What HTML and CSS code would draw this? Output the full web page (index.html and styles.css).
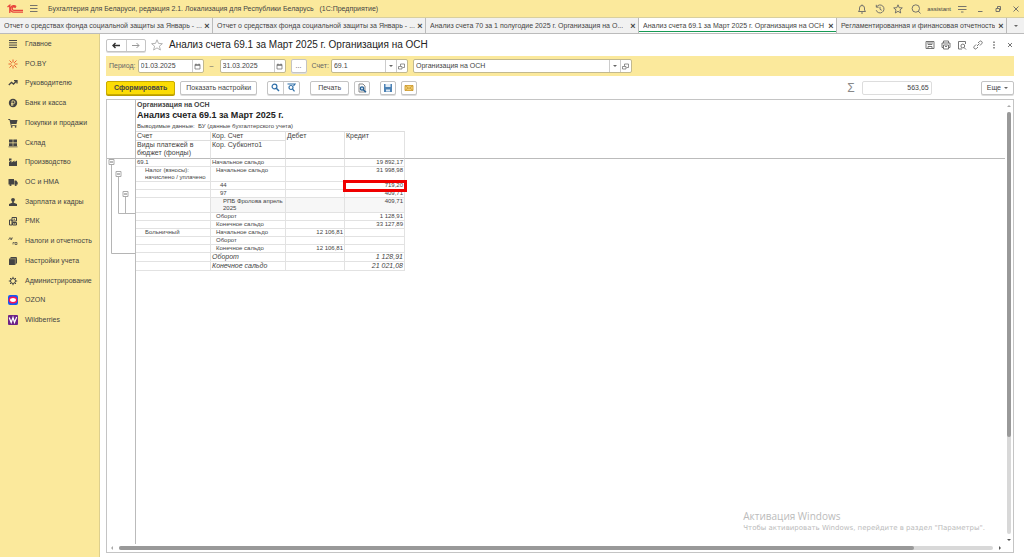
FILE: index.html
```html
<!DOCTYPE html>
<html lang="ru">
<head>
    <meta charset="UTF-8">
    <meta name="viewport" content="width=device-width, initial-scale=1.0">
    <title>Бухгалтерия для Беларуси</title>
    <link rel="stylesheet" href="styles.css">
</head>
<body>
    <!-- Window title -->
    <header class="title-bar">
        <svg class="logo" width="17" height="10" viewBox="0 0 17 10"><path d="M0.500 3L2.800 1.200V9M9.200 2.600A3.300 3.300 0 1 0 7 8.200H16M8.500 4A1.700 1.700 0 1 0 7 6.300H16" fill="none" stroke="#e8453c" stroke-width="1.300"/></svg>
        <button class="icon-button" aria-label="Меню"><svg width="9" height="9" viewBox="0 0 9 9"><path d="M1 1.500H8.500M1 4.500H8.500M1 7.500H8.500"/></svg></button>
        <span class="app-name">Бухгалтерия для Беларуси, редакция 2.1. Локализация для Республики Беларусь &nbsp; (1С:Предприятие)</span>
        <div class="window-tools">
            <button class="icon-button" aria-label="Уведомления"><svg width="10" height="10" viewBox="0 0 10 10"><path d="M1.500 7.500L2.500 6V4A2.500 2.500 0 0 1 7.500 4V6L8.500 7.500ZM4 9H6M5 0.500V1.500"/></svg></button>
            <button class="icon-button" aria-label="История"><svg width="10" height="10" viewBox="0 0 10 10"><path d="M1.500 3A4 4 0 1 1 1.200 6.200M1.300 0.800V3.200H3.700M5 2.800V5.300L6.800 6.300"/></svg></button>
            <button class="icon-button" aria-label="Избранное"><svg width="10" height="10" viewBox="0 0 10 10"><path d="M5 0.800L6.200 3.700L9.300 3.900L7 5.900L7.700 9L5 7.300L2.300 9L3 5.900L0.700 3.900L3.800 3.700Z"/></svg></button>
            <button class="icon-button" aria-label="Поиск"><svg width="10" height="10" viewBox="0 0 10 10"><circle cx="4.800" cy="4.500" r="3.700"/><path d="M7.200 7L9.500 9.500"/></svg></button>
            <span class="user">assistant</span>
            <button class="icon-button" aria-label="Настройки"><svg width="10" height="10" viewBox="0 0 10 10"><path d="M1 2.500H9.500M1 5.500H9.500M4 8H6.500"/></svg></button>
            <button class="icon-button" aria-label="Свернуть"><svg width="10" height="10" viewBox="0 0 10 10"><path d="M3 7.500H7.500"/></svg></button>
            <button class="icon-button" aria-label="Восстановить"><svg width="10" height="10" viewBox="0 0 10 10"><path d="M3 4.500H6.500V7.500H3ZM4.500 4V2.500H7.500V6H7"/></svg></button>
            <button class="icon-button" aria-label="Закрыть"><svg width="10" height="10" viewBox="0 0 10 10"><path d="M2.500 2.500L7.500 7.500M7.500 2.500L2.500 7.500"/></svg></button>
        </div>
    </header>

    <!-- Open windows -->
    <nav class="tabs">
        <div class="tab wide"><a href="#">Отчет о средствах фонда социальной защиты за Январь - ...</a><button aria-label="Закрыть">×</button></div>
        <div class="tab wide"><a href="#">Отчет о средствах фонда социальной защиты за Январь - ...</a><button aria-label="Закрыть">×</button></div>
        <div class="tab wide"><a href="#">Анализ счета 70 за 1 полугодие 2025 г. Организация на О...</a><button aria-label="Закрыть">×</button></div>
        <div class="tab medium active"><a href="#">Анализ счета 69.1 за Март 2025 г. Организация на ОСН</a><button aria-label="Закрыть">×</button></div>
        <div class="tab narrow"><a href="#">Регламентированная и финансовая отчетность</a><button aria-label="Закрыть">×</button></div>
        <button class="tab-list" aria-label="Все окна"><span class="caret"></span></button>
    </nav>

    <div class="workspace">
        <nav class="sidebar">
            <ul>
                <li><a href="#"><svg viewBox="0 0 10 10"><path d="M1 1.500H9M1 3.800H9M1 6.100H9M1 8.400H9" class="line"/></svg>Главное</a></li>
                <li><a href="#"><svg viewBox="0 0 10 10"><path d="M5 0.500V3.500M5 6.500V9.500M0.500 5H3.500M6.500 5H9.500M1.500 1.500L3.800 3.800M8.500 1.500L6.200 3.800M1.500 8.500L3.800 6.200M8.500 8.500L6.200 6.200" class="line orange"/></svg>PO.BY</a></li>
                <li><a href="#"><svg viewBox="0 0 10 10"><path d="M0.800 7L3.500 4.300L5.500 6L8.500 3M6 2.700H9V5.500" class="line bold"/></svg>Руководителю</a></li>
                <li><a href="#"><svg viewBox="0 0 10 10"><circle cx="5" cy="5" r="4.200"/><path d="M4 8V2.800H5.500A1.400 1.400 0 0 1 5.500 5.600H3M3 6.900H5.500" class="line cut"/></svg>Банк и касса</a></li>
                <li><a href="#"><svg viewBox="0 0 10 10"><path d="M0.300 1H2L2.500 2H9.500L8.500 6H3.300L3.500 7H8.500V7.800H2.800L1.500 1.900H0.300Z"/><circle cx="3.700" cy="8.800" r="0.900"/><circle cx="7.600" cy="8.800" r="0.900"/></svg>Покупки и продажи</a></li>
                <li><a href="#"><svg viewBox="0 0 10 10"><path d="M1 1.500H4.700V4.500H1ZM5.300 1.500H9V4.500H5.300ZM1 5.200H4.700V8H1ZM5.300 5.200H9V8H5.300ZM0.500 8.500H9.500V9.200H0.500Z"/></svg>Склад</a></li>
                <li><a href="#"><svg viewBox="0 0 10 10"><path d="M1 9V5L3.500 3.500V5.500L6.500 3.500V5L9 3.500V9ZM1 1.500H3.500V3L1 4Z"/></svg>Производство</a></li>
                <li><a href="#"><svg viewBox="0 0 10 10"><path d="M0.500 2H6V7.500H0.500ZM6.400 3.500H8.300L9.700 5.500V7.500H6.400Z"/><circle cx="2.500" cy="8" r="1.100"/><circle cx="7.700" cy="8" r="1.100"/></svg>ОС и НМА</a></li>
                <li><a href="#"><svg viewBox="0 0 10 10"><circle cx="5" cy="2.800" r="1.900"/><path d="M4.200 4H5.800V5.800L9 7V9H1V7L4.200 5.800Z"/></svg>Зарплата и кадры</a></li>
                <li><a href="#"><svg viewBox="0 0 10 10"><path d="M1.500 4H4V9H1.500ZM4 1.500H8.500V5H4ZM4.500 6.500H8.500V9H4.500ZM5.500 3.200H7M5.500 7.800H7.500" class="line"/></svg>РМК</a></li>
                <li><a href="#"><svg viewBox="0 0 10 10"><path d="M0.500 4L2 1.500L3 4M3.500 4V2H5M5 8.500V6.500H6.500M7 8.500V6.500H9V8.500Z" class="line light"/></svg>Налоги и отчетность</a></li>
                <li><a href="#"><svg viewBox="0 0 10 10"><path d="M1 3L3 1H9V7L7 9H1Z"/><path d="M7.300 3V8.500M1.500 2.800H7.300L9 1.300" class="line cut thin"/></svg>Настройки учета</a></li>
                <li><a href="#"><svg viewBox="0 0 10 10"><circle cx="5" cy="5" r="2.500" class="line"/><path d="M5 0.800V2.500M5 7.500V9.200M0.800 5H2.500M7.500 5H9.200M2 2L3.300 3.300M8 2L6.700 3.300M2 8L3.300 6.700M8 8L6.700 6.700" class="line"/></svg>Администрирование</a></li>
                <li><a href="#"><svg viewBox="0 0 10 10"><rect width="10" height="10" rx="2" fill="#1459f5"/><ellipse cx="5" cy="5" rx="3.700" ry="2.700" fill="#fff" stroke="#f91155" stroke-width="1.500"/></svg>OZON</a></li>
                <li><a href="#"><svg viewBox="0 0 10 10"><rect width="10" height="10" rx="1" fill="#6d2387"/><path d="M1.200 2.500L3.200 7.500L5 2.500L6.500 7.500L8.700 2" fill="none" stroke="#fff" stroke-width="1.200"/></svg>Wildberries</a></li>
            </ul>
        </nav>

        <main class="form">
            <div class="form-head">
                <div class="button-pair">
                    <button aria-label="Назад"><svg width="9" height="7" viewBox="0 0 9 7"><path d="M1 3.500H8M3.500 1L1 3.500L3.500 6" fill="none" stroke="#333" stroke-width="1.400"/></svg></button>
                    <button aria-label="Вперед"><svg width="9" height="7" viewBox="0 0 9 7"><path d="M1 3.500H8M5.500 1L8 3.500L5.500 6" fill="none" stroke="#999"/></svg></button>
                </div>
                <button class="icon-button star" aria-label="В избранное"><svg width="12" height="12" viewBox="0 0 12 12"><path d="M6 0.800L7.500 4.400L11.400 4.700L8.400 7.200L9.400 11L6 8.900L2.600 11L3.600 7.200L0.600 4.700L4.500 4.400Z"/></svg></button>
                <h1>Анализ счета 69.1 за Март 2025 г. Организация на ОСН</h1>
                <div class="form-tools">
                    <button class="icon-button" aria-label="Сохранить"><svg width="10" height="10" viewBox="0 0 10 10"><path d="M1 1.500H9V8.500H1ZM3 1.500V4.500H7V1.500M3 8.500V6.500H7V8.500M4 3H6"/></svg></button>
                    <button class="icon-button" aria-label="Печать"><svg width="10" height="10" viewBox="0 0 10 10"><path d="M2.500 3V1H7.500V3M2 7.500H1V3H9V7.500H8M2.500 5H7.500V9H2.500ZM4 6.500H6"/></svg></button>
                    <button class="icon-button" aria-label="Просмотр"><svg width="10" height="10" viewBox="0 0 10 10"><path d="M5 9H1.500V1.500H8.500V4M7 7.500L9 9.500"/><circle cx="5.800" cy="6" r="1.900"/></svg></button>
                    <button class="icon-button" aria-label="Ссылка"><svg width="10" height="10" viewBox="0 0 10 10"><path d="M4 6L6.500 3.500M5 3L6.500 1.500A1.500 1.500 0 0 1 8.700 3.700L7 5.500M5 7L3.500 8.500A1.500 1.500 0 0 1 1.300 6.300L3 4.500"/></svg></button>
                    <button class="icon-button dots" aria-label="Еще"><svg width="10" height="10" viewBox="0 0 10 10"><path d="M5 1.500V3M5 4.300V5.800M5 7V8.500"/></svg></button>
                    <button class="icon-button" aria-label="Закрыть"><svg width="10" height="10" viewBox="0 0 10 10"><path d="M3 3L7 7M7 3L3 7"/></svg></button>
                </div>
            </div>

            <!-- Report parameters -->
            <div class="params">
                <div class="labelled">
                    <label for="dateFrom">Период:</label>
                    <div class="field date">
                        <input type="text" id="dateFrom" value="01.03.2025">
                        <button aria-label="Календарь"><svg width="7" height="7" viewBox="0 0 7 7"><path d="M1 1.500H6V6H1ZM1 2.500H6M2 0.500V2M5 0.500V2"/></svg></button>
                    </div>
                </div>
                <label for="dateTo" class="dash">–</label>
                <div class="field date">
                    <input type="text" id="dateTo" value="31.03.2025">
                    <button aria-label="Календарь"><svg width="7" height="7" viewBox="0 0 7 7"><path d="M1 1.500H6V6H1ZM1 2.500H6M2 0.500V2M5 0.500V2"/></svg></button>
                </div>
                <button class="button small">...</button>
                <div class="labelled">
                    <label for="account">Счет:</label>
                    <div class="field account">
                        <select id="account"><option>69.1</option></select>
                        <button aria-label="Открыть"><svg width="7" height="7" viewBox="0 0 7 7"><path d="M0.500 3.500H4V6H0.500ZM2.500 3V1H6.500V4.500H4.500"/></svg></button>
                    </div>
                </div>
                <div class="field company">
                    <select aria-label="Организация"><option>Организация на ОСН</option></select>
                    <button aria-label="Открыть"><svg width="7" height="7" viewBox="0 0 7 7"><path d="M0.500 3.500H4V6H0.500ZM2.500 3V1H6.500V4.500H4.500"/></svg></button>
                </div>
            </div>

            <!-- Commands -->
            <div class="commands">
                <button class="button roomy primary">Сформировать</button>
                <button class="button">Показать настройки</button>
                <div class="button-pair search">
                    <button aria-label="Найти"><svg width="9" height="9" viewBox="0 0 9 9"><circle cx="3.500" cy="3.500" r="2.400" fill="none" stroke="#2f6fa8" stroke-width="1.200"/><path d="M5.300 5.300L8 8" stroke="#2f6fa8" stroke-width="1.500"/></svg></button>
                    <button aria-label="Найти далее"><svg width="9" height="9" viewBox="0 0 9 9"><circle cx="4" cy="4.500" r="2" fill="none" stroke="#2f6fa8" stroke-width="1.200"/><path d="M5.500 6L7.500 8.300M0.500 1H8L6.500 3" fill="none" stroke="#2f6fa8" stroke-width="1.200"/></svg></button>
                </div>
                <button class="button roomy">Печать</button>
                <button class="button small preview" aria-label="Предварительный просмотр"><svg width="10" height="10" viewBox="0 0 10 10"><path d="M2 1H6L8 3V9H2Z" fill="#fff" stroke="#888"/><circle cx="5" cy="5.500" r="1.700" fill="#cfe2f2" stroke="#245f94" stroke-width="1.200"/><path d="M6.300 6.800L9 9.300" stroke="#245f94" stroke-width="1.500"/></svg></button>
                <button class="button small" aria-label="Сохранить"><svg width="10" height="10" viewBox="0 0 10 10"><path d="M1 1H9V9H1Z" fill="#4c82b5"/><path d="M2.500 1H7.500V4H2.500ZM3 6.500H7V8.500H3Z" fill="#dfeaf4"/></svg></button>
                <button class="button small" aria-label="Отправить"><svg width="10" height="10" viewBox="0 0 10 10"><path d="M1 2.500H9V7.500H1Z" fill="#f3cf70" stroke="#d6a640"/><path d="M1 2.500L5 5.500L9 2.500M1 7.500L4 5M9 7.500L6 5" fill="none" stroke="#b8841c" stroke-width="0.600"/></svg></button>
                <label class="sum-label" for="sum">Σ</label>
                <input type="text" class="sum" id="sum" value="563,65" readonly>
                <button class="button more">Еще <span class="caret"></span></button>
            </div>

            <!-- Report sheet -->
            <section class="report">
                <div class="report-view">
                    <div class="groups">
                        <div class="groups-head"></div>
                        <svg width="28" height="96" viewBox="0 0 28 96"><path d="M4.500 5V94.500H28M11.500 17V54.500H28M18.500 37V54.500" fill="none" stroke="#b5b5b5"/><path d="M2 0.500H7V5.500H2ZM9 12.500H14V17.500H9ZM16 32.500H21V37.500H16Z" fill="#fff" stroke="#aaa"/><path d="M3 3H6M10 15H13M17 35H20" stroke="#777"/></svg>
                    </div>
                    <div class="sheet">
                        <div class="sheet-title">
                            <p class="company-name">Организация на ОСН</p>
                            <h2>Анализ счета 69.1 за Март 2025 г.</h2>
                            <p>Выводимые данные: &nbsp;БУ (данные бухгалтерского учета)</p>
                        </div>
                        <table>
                            <colgroup><col class="c1"><col class="c2"><col class="c3"><col class="c4"><col></colgroup>
                            <thead>
                                <tr><th>Счет</th><th>Кор. Счет</th><th rowspan="2">Дебет</th><th rowspan="2">Кредит</th><td rowspan="2"></td></tr>
                                <tr><th>Виды платежей в бюджет (фонды)</th><th>Кор. Субконто1</th></tr>
                            </thead>
                            <tbody>
                                <tr><td>69.1</td><td>Начальное сальдо</td><td></td><td>19 892,17</td></tr>
                                <tr><td class="in1">Налог (взносы): начислено / уплачено</td><td class="in0">Начальное сальдо</td><td></td><td>31 998,98</td></tr>
                                <tr><td></td><td class="in1">44</td><td></td><td class="marked">719,20</td></tr>
                                <tr><td></td><td class="in1">97</td><td></td><td>409,71</td></tr>
                                <tr class="detail"><td></td><td class="in2">РПБ Фролова апрель 2025</td><td></td><td>409,71</td></tr>
                                <tr><td></td><td class="in0">Оборот</td><td></td><td>1 128,91</td></tr>
                                <tr><td></td><td class="in0">Конечное сальдо</td><td></td><td>33 127,89</td></tr>
                                <tr><td class="in1">Больничный</td><td class="in0">Начальное сальдо</td><td>12 106,81</td><td></td></tr>
                                <tr><td></td><td class="in0">Оборот</td><td></td><td></td></tr>
                                <tr><td></td><td class="in0">Конечное сальдо</td><td>12 106,81</td><td></td></tr>
                                <tr class="total"><td></td><td>Оборот</td><td></td><td>1 128,91</td></tr>
                                <tr class="total"><td></td><td>Конечное сальдо</td><td></td><td>21 021,08</td></tr>
                            </tbody>
                        </table>
                    </div>
                    <div class="scroll vertical"><span class="arrow up"></span><div class="track"><div class="thumb"></div></div><span class="arrow down"></span></div>
                </div>
                <div class="scroll horizontal"><span class="arrow left"></span><div class="track"><div class="thumb"></div></div><span class="arrow right"></span></div>
                <div class="watermark">
                    <strong>Активация Windows</strong>
                    <span>Чтобы активировать Windows, перейдите в раздел "Параметры".</span>
                </div>
            </section>
        </main>
    </div>
</body>
</html>
```
FILE: styles.css
```css
* {
    box-sizing: border-box;
}
body {
    display: flex;
    flex-direction: column;
    height: 100vh;
    margin: 0;
    overflow: hidden;
    font-family: "Liberation Sans", Arial, sans-serif;
    font-size: 7px;
    line-height: 8px;
    color: #444;
    background-color: #fff;
}
button, input, select {
    font: inherit;
    color: inherit;
    margin: 0;
    padding: 0;
    border: none;
    background: none;
}
button {
    display: flex;
    align-items: center;
    justify-content: center;
    cursor: pointer;
}
a {
    color: inherit;
    text-decoration: none;
}
h1, h2, p, ul {
    margin: 0;
    padding: 0;
}
.icon-button svg, .field svg {
    fill: none;
    stroke: #666;
    stroke-width: 0.9;
}
.field svg {
    stroke-width: 0.7;
}
.caret {
    border: 2px solid transparent;
    border-top-color: #666;
    border-bottom-width: 0;
}

/* Title bar */
.title-bar {
    display: flex;
    align-items: center;
    flex: none;
    height: 17px;
    padding: 0 3px 0 7px;
    background-color: #fbe99c;
}
.title-bar .logo {
    margin-right: 5px;
}
.app-name {
    margin-left: 10px;
}
.window-tools {
    display: flex;
    align-items: center;
    gap: 8px;
    margin-left: auto;
}
.user {
    font-size: 6px;
    margin: 0 -2px;
}

/* Tabs */
.tabs {
    display: flex;
    flex: none;
    height: 17px;
    background-color: #f1f1f1;
    border-top: 1px solid #d8cf9f;
    border-bottom: 1px solid #bbb;
}
.tab {
    display: flex;
    align-items: center;
    justify-content: space-between;
    min-width: 0;
    padding: 0 2px 0 4px;
    border-right: 1px solid #bbb;
    white-space: nowrap;
}
.tab.wide {
    flex: 1 1 213px;
}
.tab.medium {
    flex: 1 1 198px;
}
.tab.narrow {
    flex: 1 1 170px;
}
.tab a {
    overflow: hidden;
}
.tab button {
    flex: none;
    width: 6px;
    font-size: 9px;
    font-weight: bold;
}
.tab.active {
    background-color: #fff;
    box-shadow: inset 0 -1px #fff, inset 0 -2px #169a54;
}
.tab-list {
    flex: none;
    width: 17px;
}

/* Sidebar */
.workspace {
    display: flex;
    flex: 1;
    min-height: 0;
}
.sidebar {
    flex: none;
    width: 100px;
    background-color: #fbe99c;
    border-right: 1px solid #ddcf8e;
}
.sidebar ul {
    display: grid;
    grid-auto-rows: 1fr;
    height: 296px;
    list-style: none;
}
.sidebar a {
    display: flex;
    align-items: center;
    gap: 7px;
    height: 100%;
    padding-left: 8px;
    white-space: nowrap;
}
.sidebar svg {
    width: 10px;
    height: 10px;
    fill: #444;
}
.sidebar .line {
    fill: none;
    stroke: #444;
}
.sidebar .bold {
    stroke-width: 1.3;
}
.sidebar .light {
    stroke-width: 0.7;
}
.sidebar .orange {
    stroke: #e8632c;
}
.sidebar .cut {
    stroke: #fbe99c;
    stroke-width: 0.8;
}
.sidebar .thin {
    stroke-width: 0.4;
}

/* Form */
.form {
    display: flex;
    flex-direction: column;
    flex: 1;
    min-width: 0;
    padding: 0 10px 4px 6px;
}
.form-head {
    display: flex;
    align-items: center;
    flex: none;
    height: 22px;
}
.form-head .star {
    margin: 0 6px 0 5px;
}
.star svg {
    stroke: #aaa;
}
h1 {
    font-size: 10px;
    line-height: 12px;
    font-weight: normal;
    color: #222;
}
.form-tools {
    display: flex;
    gap: 6px;
    margin: 0 -1px 0 auto;
}
.form-tools .dots svg {
    stroke-width: 1.4;
}
.button, .button-pair {
    border: 1px solid #c4c4c4;
    border-radius: 2px;
    background-color: #fff;
    box-shadow: 0 1px #ddd;
}
.button {
    height: 14px;
    padding: 0 5px;
    white-space: nowrap;
}
.button.roomy {
    padding: 0 7px;
}
.button.small {
    width: 16px;
    padding: 0;
}
.button-pair {
    display: flex;
    width: 40px;
    height: 13px;
}
.button-pair button {
    flex: 1;
}
.button-pair button + button {
    border-left: 1px solid #ccc;
}

/* Parameters */
.params {
    display: flex;
    align-items: center;
    gap: 5px;
    flex: none;
    height: 20px;
    padding-left: 3px;
    background-color: #fbe99c;
}
.params label {
    color: #666;
}
.params label.dash {
    width: 6px;
    text-align: center;
}
.labelled {
    display: flex;
    align-items: center;
    gap: 2px;
}
.field {
    display: flex;
    height: 14px;
    border: 1px solid #c2b98f;
    border-radius: 2px;
    background-color: #fff;
}
.field input, .field select {
    flex: 1;
    min-width: 0;
    padding-left: 2px;
}
.field select {
    appearance: none;
    background: url("data:image/svg+xml,%3Csvg xmlns='http://www.w3.org/2000/svg' width='11' height='12'%3E%3Cpath d='M.5 0V12' stroke='%23ccc'/%3E%3Cpath d='M4 5H8L6 7Z' fill='%23666'/%3E%3C/svg%3E") no-repeat right center;
}
.field button {
    width: 11px;
    border-left: 1px solid #ccc;
}
.field.date {
    width: 66px;
}
.field.account {
    width: 77px;
}
.field.company {
    width: 219px;
}

/* Commands */
.commands {
    display: flex;
    align-items: center;
    gap: 5px;
    flex: none;
    height: 23px;
}
.button.primary {
    font-weight: bold;
    background-color: #fbdc05;
    border-color: #c9ab00;
    box-shadow: 0 1px #b89c00;
}
.button-pair.search {
    width: 33px;
    height: 14px;
    margin: 0 5px;
}
.preview {
    margin-right: 5px;
}
.sum-label {
    margin-left: auto;
    font-size: 12px;
    color: #888;
}
.sum {
    width: 70px;
    height: 14px;
    margin: 0 44px 0 2px;
    padding-right: 2px;
    border: 1px solid #ddd;
    border-radius: 2px;
    text-align: right;
}
.button.more {
    gap: 3px;
}

/* Report */
.report {
    position: relative;
    display: flex;
    flex-direction: column;
    flex: 1;
    min-height: 0;
    border: 1px solid #c4c4c4;
}
.report-view {
    display: flex;
    flex: 1;
    min-height: 0;
}
.groups {
    flex: none;
    width: 29px;
    border-right: 1px solid #bbb;
}
.groups-head {
    height: 59px;
    border-bottom: 1px solid #bbb;
}
.groups svg {
    display: block;
}
.sheet {
    flex: 1;
    min-width: 0;
    overflow: hidden;
}
.sheet-title {
    height: 31px;
    padding: 1px 0 0 1px;
    font-size: 6px;
}
.sheet-title .company-name {
    font-size: 7px;
    font-weight: bold;
}
.sheet-title h2 {
    font-size: 9px;
    line-height: 13px;
    color: #222;
}
table {
    width: 100%;
    table-layout: fixed;
    border-collapse: separate;
    border-spacing: 0;
    font-size: 6px;
    line-height: 7px;
}
.c1, .c2 {
    width: 75px;
}
.c3 {
    width: 59px;
}
.c4 {
    width: 60px;
}
th, td {
    padding: 0 1px;
    vertical-align: top;
    text-align: left;
    border-right: 1px solid #e2e2e2;
    border-bottom: 1px solid #e2e2e2;
}
th {
    font-size: 7px;
    line-height: 8px;
    font-weight: normal;
    border-top: 1px solid #ddd;
    border-bottom: none;
}
thead td {
    border-right: none;
}
thead tr:last-child th, thead [rowspan] {
    padding-bottom: 1px;
    border-bottom: 1px solid #bbb;
}
tbody tr {
    height: 8px;
}
td:nth-child(3), td:nth-child(4) {
    text-align: right;
}
td.in0 {
    padding-left: 5px;
}
td.in1 {
    padding-left: 9px;
}
td.in2 {
    padding-left: 12px;
}
.detail td:not(:first-child) {
    background-color: #f7f7f7;
}
.total td {
    font-size: 7px;
    line-height: 8px;
    font-style: italic;
}
.marked {
    outline: 3px solid #f00000;
    outline-offset: -1px;
}

/* Scrollbars */
.scroll {
    display: flex;
    align-items: center;
    flex: none;
}
.scroll.vertical {
    flex-direction: column;
    width: 8px;
    padding: 5px 0 3px;
    gap: 5px;
}
.scroll.horizontal {
    height: 8px;
    padding: 0 12px 0 4px;
    gap: 6px;
}
.track {
    flex: 1;
    border-radius: 2px;
    background-color: #d8d8d8;
}
.thumb {
    border-radius: 2px;
    background-color: #999;
}
.vertical .track {
    width: 4px;
}
.vertical .thumb {
    height: 77%;
}
.horizontal .track {
    height: 4px;
}
.horizontal .thumb {
    width: 91%;
    height: 4px;
}
.arrow {
    border: 2px solid transparent;
}
.arrow.up {
    border-top-width: 0;
    border-bottom-color: #aaa;
}
.arrow.down {
    border-bottom-width: 0;
    border-top-color: #555;
}
.arrow.left {
    border-left-width: 0;
    border-right-color: #aaa;
}
.arrow.right {
    border-right-width: 0;
    border-left-color: #555;
}

/* Lies over the empty part of the sheet */
.watermark {
    position: absolute;
    right: 28px;
    bottom: 19px;
    display: flex;
    flex-direction: column;
    font-family: "Open Sans", "Noto Sans", sans-serif;
    color: #bbb;
}
.watermark strong {
    font-size: 10px;
    line-height: 14px;
    font-weight: normal;
}
.watermark span {
    font-family: "DejaVu Sans", sans-serif;
    line-height: 10px;
}
```
